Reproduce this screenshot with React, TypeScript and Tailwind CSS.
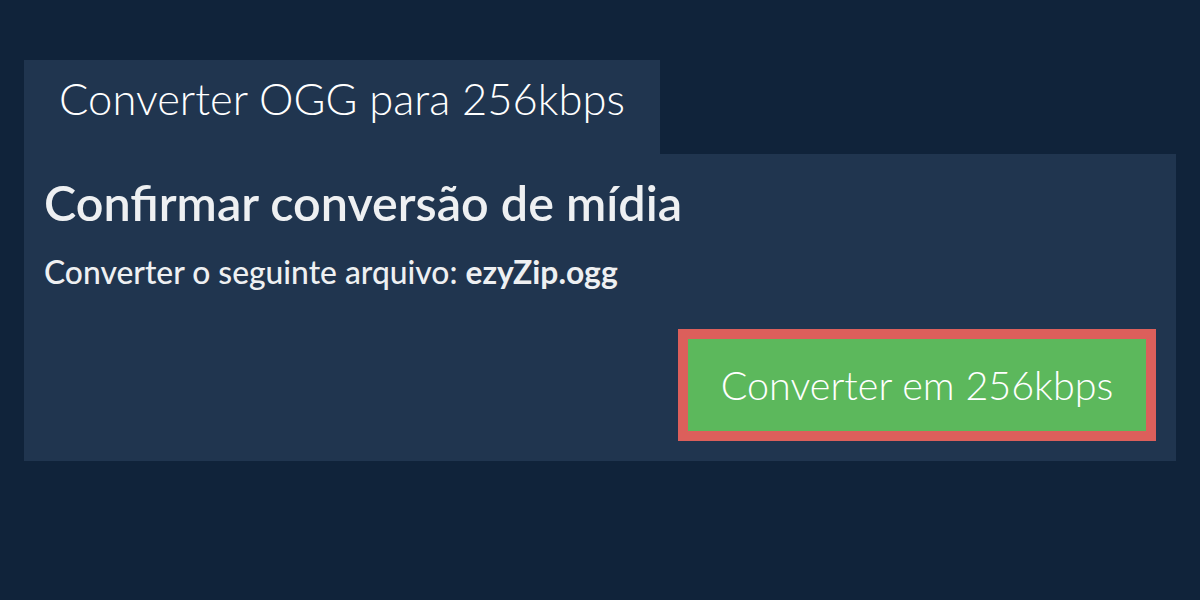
export default function App() {
  return (
    <div
      className="w-[1200px] h-[600px] bg-[#10233a] px-6 pt-[60px]"
      style={{ fontFamily: 'Lato, "Open Sans", sans-serif' }}
    >
      {/* Tab */}
      <div className="w-[636px] h-[94px] bg-[#20354f] flex justify-center pt-[12px]">
        <h1 className="text-[43.5px] font-light text-white leading-[1.2]">Converter OGG para 256kbps</h1>
      </div>

      {/* Panel */}
      <div className="bg-[#20354f] px-5 pt-5 pb-5 flex flex-col">
        <h2 className="text-[48.5px] font-semibold text-[#eef0f2] leading-[57.6px]">Confirmar conversão de mídia</h2>
        <p className="mt-[21px] text-[31.8px] font-medium text-[#eef0f2] leading-[1.2]">
          Converter o seguinte arquivo: <span className="font-bold">ezyZip.ogg</span>
        </p>
        <div className="flex justify-end mt-[38px]">
          <button className="w-[478px] h-[112px] border-[10px] border-[#dc5f5b] bg-[#5cb85c] text-white text-[39.5px] font-light leading-[1.2]">
            Converter em 256kbps
          </button>
        </div>
      </div>
    </div>
  )
}
